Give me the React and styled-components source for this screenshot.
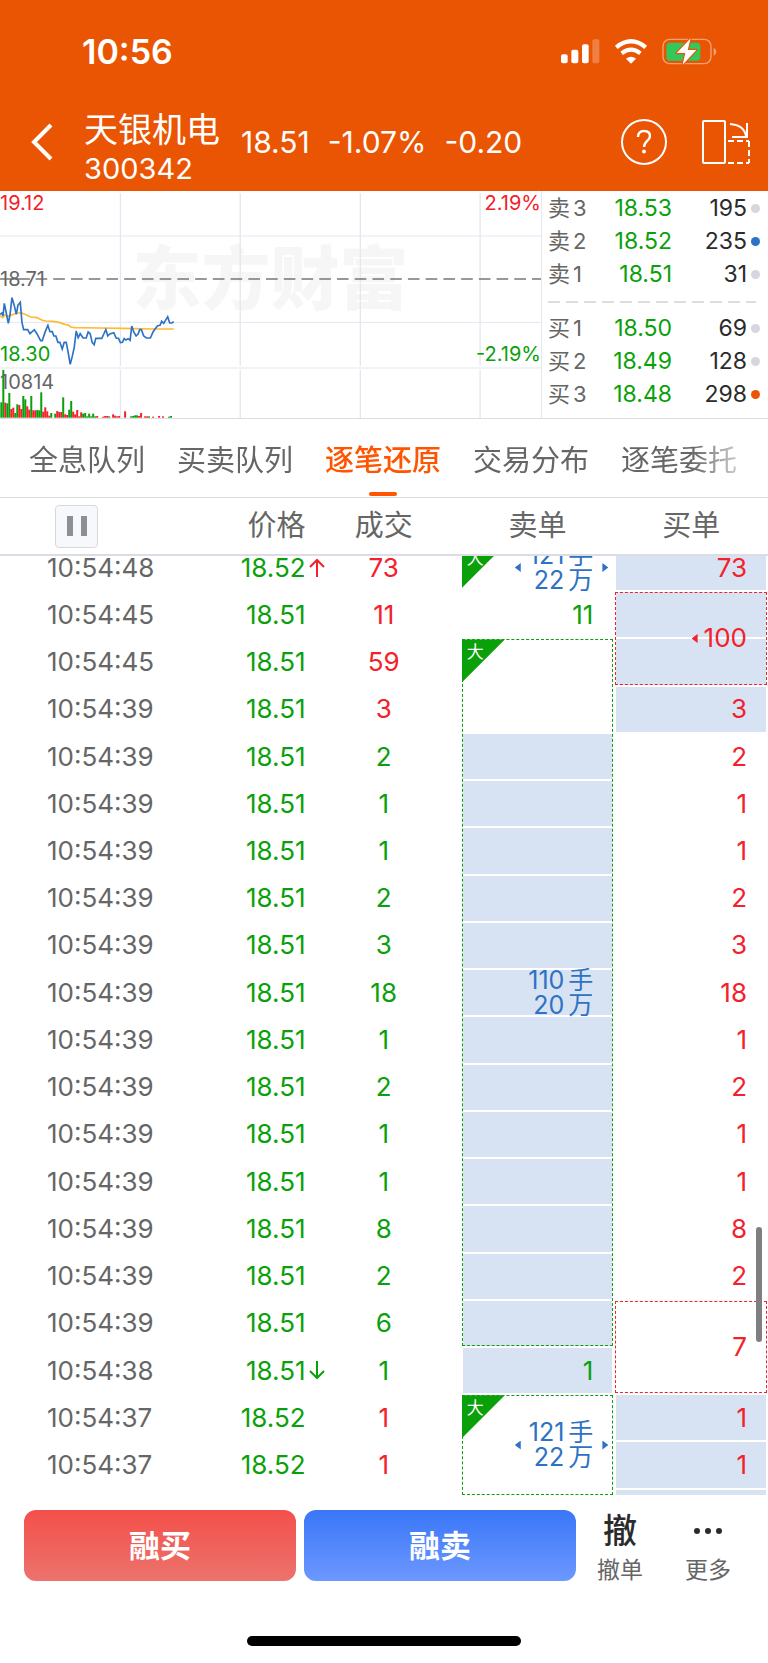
import React, { useLayoutEffect, useRef } from "react";
import styled, { createGlobalStyle, css } from "styled-components";

const colors = {
	brand: "#ea5504",
	accent: "#ff5500",
	red: "#f4202a",
	green: "#0aa00a",
	blue: "#2d72c4",
	band: "#d7e3f3",
	text: "#666666",
	dark: "#2b2b2b",
	line: "#dcdce4",
};

const GlobalStyle = createGlobalStyle`
	* {
		box-sizing: border-box;
	}

	body {
		margin: 0;
		background-color: #ffffff;
		color: ${colors.text};
		font-family: Inter, "Noto Sans CJK SC", sans-serif;
	}

	button {
		padding: 0;
		border: none;
		background: none;
		color: inherit;
		font: inherit;
		cursor: pointer;
	}
`;

const Screen = styled.div`
	display: flex;
	flex-direction: column;
	height: 100vh;
`;

const Header = styled.header`
	padding-bottom: 1px;
	background-color: ${colors.brand};
	color: #ffffff;
`;

const StatusBar = styled.div`
	display: flex;
	align-items: center;
	height: 102px;
	padding: 0 51px 0 82px;
`;

const Clock = styled.span`
	margin-right: auto;
	font-size: 34px;
	font-weight: 600;
`;

const StatusIcons = styled.div`
	display: flex;
	align-items: center;
	gap: 14px;
`;

const TitleBar = styled.div`
	display: flex;
	align-items: center;
	height: 88px;
	padding: 0 17px 8px 30px;
`;

const IconButton = styled.button`
	display: flex;
	margin-left: ${({ $gap }) => $gap || 0}px;
`;

const StockName = styled.h1`
	display: flex;
	flex-direction: column;
	margin: 14px 21px 0 31px;
	font-size: 34px;
	font-weight: 400;
	line-height: 40px;
`;

const StockCode = styled.span`
	font-size: 29px;
	line-height: 38px;
`;

const Quote = styled.div`
	display: flex;
	gap: 18px;
	margin-right: auto;
	font-size: 30px;
`;

const MarketPanel = styled.section`
	display: flex;
	border-bottom: 1px solid ${colors.line};
`;

const Chart = styled.div`
	position: relative;
	flex: 1;
	height: 227px;
	border-right: 1px solid #e6e8f0;
`;

const ChartDrawing = styled.svg`
	position: relative;
	display: block;
	width: 100%;
	height: 100%;
`;

const Watermark = styled.span`
	position: absolute;
	top: 53px;
	left: 0;
	right: 0;
	color: #f6f6f6;
	font-size: 69px;
	font-weight: 900;
	line-height: 70px;
	text-align: center;
`;

const ChartLabel = styled.span`
	position: absolute;
	top: ${({ $top }) => $top}px;
	${({ $right }) => ($right ? "right: 0" : "left: 0")};
	color: ${({ $color }) => colors[$color]};
	font-size: 20px;
	line-height: 22px;
`;

const OrderBook = styled.div`
	width: 226px;
	padding-top: 1px;
`;

const BookRow = styled.div`
	display: grid;
	grid-template-columns: 44px 80px 1fr 13px;
	align-items: center;
	height: 33px;
	padding: 0 8px 0 6px;
	font-size: 23px;
	line-height: 33px;
`;

const BookLabel = styled.span`
	display: flex;
	gap: 3px;
	font-size: 22px;
`;

const BookPrice = styled.span`
	color: ${colors.green};
	text-align: right;
`;

const BookAmount = styled.span`
	color: ${colors.dark};
	text-align: right;
`;

const Dot = styled.i`
	justify-self: end;
	width: 9px;
	height: 9px;
	border-radius: 50%;
	background-color: ${({ $color }) => $color || "#d4d7de"};
`;

const BookDivider = styled.div`
	height: 2px;
	margin: 10px 12px 9px 6px;
	background: repeating-linear-gradient(
		to right,
		${colors.line} 0 12px,
		transparent 12px 18px
	);
`;

const Tabs = styled.nav`
	display: flex;
	gap: 32px;
	height: 78px;
	padding-left: 29px;
	overflow: hidden;
	mask-image: linear-gradient(to right, #000000 90%, transparent 99%);
`;

const Tab = styled.button`
	position: relative;
	flex: none;
	font-size: 29px;
	${({ $active }) =>
		$active &&
		css`
			color: ${colors.accent};
			font-weight: 500;

			&::after {
				content: "";
				position: absolute;
				left: calc(50% - 14px);
				bottom: 1px;
				width: 28px;
				height: 4px;
				border-radius: 2px;
				background-color: ${colors.accent};
			}
		`}
`;

const TradeArea = styled.section`
	position: relative;
	flex: 1;
	min-height: 0;
	border-top: 1px solid ${colors.line};
`;

const TradeScroller = styled.div`
	height: 100%;
	overflow-y: auto;
	scrollbar-width: none;
`;

const ScrollThumb = styled.div`
	position: absolute;
	top: 73%;
	right: 6px;
	width: 6px;
	height: 115px;
	border-radius: 3px;
	background-color: #7f7f7f;
`;

const TradeTable = styled.table`
	width: 100%;
	height: calc(100% + 12px);
	border-collapse: separate;
	border-spacing: 0;
	table-layout: fixed;
	font-size: 26px;
`;

const HeadCell = styled.th`
	position: sticky;
	top: 0;
	z-index: 2;
	width: ${({ $width }) => $width}%;
	height: 58px;
	padding: 0 ${({ $right }) => $right || 0}px 0 ${({ $left }) => $left || 0}px;
	border-bottom: 2px solid ${colors.line};
	background-color: #ffffff;
	font-size: 29px;
	font-weight: 400;
	line-height: 40px;
	text-align: ${({ $align }) => $align || "center"};
`;

const PauseButton = styled.button`
	display: flex;
	align-items: center;
	justify-content: center;
	width: 43px;
	height: 43px;
	border: 1px solid #d6d9e0;
	border-radius: 4px;
	background-color: #f6f8fb;
`;

const TradeRow = styled.tr`
	height: ${({ $partial }) => ($partial ? 7 : 47)}px;
`;

const Cell = styled.td`
	padding: 0;
	line-height: 30px;
`;

const TimeCell = styled(Cell)`
	padding-left: 47px;
`;

const PriceCell = styled(Cell)`
	color: ${colors.green};
	text-align: right;
`;

const ArrowSlot = styled.span`
	display: inline-block;
	width: 20px;
	padding-left: 3px;
	text-align: left;
`;

const AmountCell = styled(Cell)`
	padding-right: 19px;
	color: ${({ $side }) => colors[$side]};
	text-align: center;
`;

const OrderCell = styled(Cell)`
	position: relative;
	padding-right: 21px;
	color: ${({ $color }) => colors[$color]};
	text-align: right;
`;

const Bands = styled.div`
	position: absolute;
	inset: 0 2px;
	display: grid;
	grid-auto-rows: 1fr;
`;

const Band = styled.div`
	margin: 1px 0;
	background-color: ${({ $filled }) => ($filled ? colors.band : "transparent")};
`;

const Frame = styled.div`
	position: absolute;
	inset: 1px;
	border: 1px dashed ${({ $color }) => colors[$color]};
`;

const BigMark = styled.span`
	position: absolute;
	top: 1px;
	left: 1px;
	width: 43px;
	height: 43px;
	padding: 3px 0 0 5px;
	background-color: ${colors.green};
	clip-path: polygon(0 0, 100% 0, 0 100%);
	color: #ffffff;
	font-size: 17px;
	line-height: 20px;
	text-align: left;
`;

const OrderValue = styled.div`
	position: relative;
	display: flex;
	align-items: center;
	justify-content: flex-end;
	gap: ${({ $big }) => ($big ? 8 : 6)}px;
`;

const OrderLines = styled.div`
	margin: -2px 0;
	color: ${colors.blue};
	font-size: 25px;
	line-height: 25px;
`;

const OrderLine = styled.div`
	display: flex;
	justify-content: flex-end;
	gap: 4px;
`;

const Pointer = styled.i`
	width: 6px;
	height: 9px;
	background-color: currentColor;
	clip-path: polygon(0 50%, 100% 0, 100% 100%);
	${({ $blue }) => $blue && `color: ${colors.blue};`}
	${({ $next }) =>
		$next &&
		css`
			position: absolute;
			right: -15px;
			clip-path: polygon(0 0, 100% 50%, 0 100%);
		`}
`;

const Footer = styled.footer`
	padding: 14px 16px 17px 24px;
`;

const Actions = styled.div`
	display: flex;
	align-items: flex-start;
`;

const TradeButton = styled.button`
	flex: 1;
	height: 71px;
	padding-bottom: 4px;
	border-radius: 12px;
	background: linear-gradient(${({ $from, $to }) => `${$from}, ${$to}`});
	color: #ffffff;
	font-size: 31px;
	font-weight: 600;

	& + & {
		margin-left: 8px;
	}
`;

const SmallAction = styled.button`
	display: flex;
	flex-direction: column;
	align-items: center;
	width: 88px;
	font-size: 23px;
	line-height: 36px;
`;

const ActionIcon = styled.span`
	display: flex;
	align-items: center;
	height: 42px;
	color: ${colors.dark};
	font-size: 34px;
	font-weight: 500;
`;

const HomeIndicator = styled.div`
	width: 274px;
	height: 10px;
	margin: 48px auto 0;
	border-radius: 5px;
	background-color: #000000;
	transform: translateX(-4px);
`;

const book = {
	sell: [
		{ label: "卖", level: 3, price: "18.53", amount: 195 },
		{ label: "卖", level: 2, price: "18.52", amount: 235, dot: colors.blue },
		{ label: "卖", level: 1, price: "18.51", amount: 31 },
	],
	buy: [
		{ label: "买", level: 1, price: "18.50", amount: 69 },
		{ label: "买", level: 2, price: "18.49", amount: 128 },
		{ label: "买", level: 3, price: "18.48", amount: 298, dot: colors.brand },
	],
};

const tabs = ["全息队列", "买卖队列", "逐笔还原", "交易分布", "逐笔委托"];

const fill = (count, value) => Array(count).fill(value);

// bands: one entry per trade that the order covers, true = shaded
const trades = [
	{
		time: "10:54:48", price: "18.52", trend: "up", amount: 73, side: "red",
		sell: { bands: [false], big: true, lines: [["121", "手"], ["22", "万"]], linked: true },
		buy: { bands: [true], value: 73 },
	},
	{
		time: "10:54:45", price: "18.51", amount: 11, side: "red",
		sell: { bands: [false], value: 11 },
		buy: { bands: [true, true], value: 100, framed: true, previous: true },
	},
	{
		time: "10:54:45", price: "18.51", amount: 59, side: "red",
		sell: {
			bands: [false, false, ...fill(13, true)],
			big: true,
			framed: true,
			lines: [["110", "手"], ["20", "万"]],
		},
	},
	{ time: "10:54:39", price: "18.51", amount: 3, side: "red", buy: { bands: [true], value: 3 } },
	...[2, 1, 1, 2, 3, 18, 1, 2, 1, 1, 8, 2].map((amount) => ({
		time: "10:54:39", price: "18.51", amount, side: "green",
		buy: { bands: [false], value: amount },
	})),
	{
		time: "10:54:39", price: "18.51", amount: 6, side: "green",
		buy: { bands: [false, false], value: 7, framed: true },
	},
	{
		time: "10:54:38", price: "18.51", trend: "down", amount: 1, side: "green",
		sell: { bands: [true], value: 1 },
	},
	{
		time: "10:54:37", price: "18.52", amount: 1, side: "red",
		sell: {
			bands: [false, false, false],
			big: true,
			framed: true,
			lines: [["121", "手"], ["22", "万"]],
			linked: true,
		},
		buy: { bands: [true], value: 1 },
	},
	{ time: "10:54:37", price: "18.52", amount: 1, side: "red", buy: { bands: [true], value: 1 } },
	{ partial: true, buy: { bands: [true] } },
];

const priceLine =
	"0,388 6,384 9,393 13,355 20,390 25,415 30,390 36,338 43,362 49,388 54,360 61,352 66,412 71,434 83,434 90,446 103,434 111,446 122,467 127,467 136,440 144,421 150,440 157,440 162,453 168,453 174,472 180,472 187,492 193,472 199,472 205,503 211,538 217,515 223,488 229,438 235,458 241,446 250,459 259,459 265,441 271,446 277,472 283,479 288,460 306,460 312,447 318,434 324,453 330,447 342,443 349,459 356,460 362,473 368,472 373,461 378,465 385,461 391,466 396,423 402,441 409,453 415,447 420,434 425,434 432,453 440,459 452,459 460,441 466,432 474,422 481,421 486,409 492,415 504,395 510,414 517,414 522,410";

const averageLine =
	"0,392 8,398 15,390 25,394 35,390 50,384 66,384 80,390 92,396 112,398 125,405 138,408 160,409 180,413 195,418 205,420 213,426 225,428 300,429 370,430 460,432 522,432";

const volumes = [
	[1, 46, "g"], [7, 143, "g"], [13, 45, "r"], [19, 43, "g"], [25, 74, "g"], [31, 26, "r"],
	[37, 30, "r"], [43, 14, "g"], [49, 40, "g"], [55, 38, "r"], [61, 26, "r"], [67, 65, "g"],
	[73, 55, "g"], [79, 34, "r"], [85, 24, "r"], [91, 65, "g"], [97, 22, "r"], [103, 22, "r"],
	[109, 23, "g"], [115, 22, "g"], [121, 76, "g"], [127, 18, "r"], [133, 31, "r"], [139, 19, "r"],
	[145, 6, "r"], [151, 14, "g"], [163, 12, "g"], [169, 20, "r"], [175, 17, "r"], [181, 17, "r"],
	[187, 61, "g"], [193, 10, "r"], [199, 8, "r"], [205, 24, "g"], [211, 50, "g"], [217, 18, "r"],
	[223, 10, "r"], [229, 23, "r"], [235, 4, "r"], [241, 16, "r"], [247, 12, "g"], [253, 14, "g"],
	[259, 4, "g"], [265, 12, "g"], [271, 4, "g"], [277, 12, "g"], [283, 4, "g"], [289, 5, "r"],
	[307, 3, "r"], [313, 5, "r"], [319, 5, "r"], [325, 4, "g"], [337, 10, "r"], [343, 6, "r"],
	[349, 4, "r"], [355, 5, "r"], [373, 19, "r"], [391, 4, "g"], [397, 5, "g"], [403, 7, "g"],
	[409, 7, "g"], [415, 5, "r"], [421, 14, "r"], [433, 4, "r"], [439, 4, "r"], [445, 4, "g"],
	[457, 3, "r"], [475, 5, "r"], [487, 4, "r"], [505, 3, "g"], [511, 5, "g"],
];

const SignalIcon = () => (
	<svg width="39" height="25" viewBox="533 116 117 75" fill="#ffffff">
		<rect x="533" y="162" width="20" height="27" rx="6" />
		<rect x="564" y="148" width="21" height="41" rx="6" />
		<rect x="596" y="132" width="20" height="57" rx="6" />
		<rect x="627" y="117" width="21" height="72" rx="6" opacity="0.25" />
	</svg>
);

const WifiIcon = () => (
	<svg width="34" height="25" viewBox="690 115 102 75" fill="none" stroke="#ffffff">
		<path d="M697 140Q741 104 785 140" strokeWidth="13" />
		<path d="M713 158Q741 136 769 158" strokeWidth="12" />
		<path d="M726 174Q741 162 756 174L741 189Z" fill="#ffffff" stroke="none" />
	</svg>
);

const BatteryIcon = () => (
	<svg width="55" height="27" viewBox="833 112 165 81">
		<rect x="836" y="116" width="144" height="73" rx="20" fill="none" stroke="#ffffff" strokeOpacity="0.45" strokeWidth="4" />
		<path d="M988 141Q996 145 996 153T988 165Z" fill="#ffffff" fillOpacity="0.45" />
		<rect x="846" y="126" width="102" height="54" rx="11" fill="#34c759" />
		<path
			d="M919 113L877 157H903L895 192L936 148H910Z"
			fill="#ffffff"
			stroke={colors.brand}
			strokeWidth="7"
			strokeLinejoin="round"
			paintOrder="stroke"
		/>
	</svg>
);

const BackIcon = () => (
	<svg width="23" height="38" viewBox="0 0 23 38" fill="none" stroke="#ffffff" strokeWidth="4">
		<path d="M21 2L4 19L21 36" />
	</svg>
);

const HelpIcon = () => (
	<svg width="46" height="46" viewBox="0 0 46 46" fill="none" stroke="#ffffff" strokeWidth="2">
		<circle cx="23" cy="23" r="22" />
		<path d="M17 18C17 14 19 12 23 12C27 12 29 14 29 17C29 22 23 22 23 28" strokeWidth="2.4" />
		<circle cx="23" cy="32.5" r="2" fill="#ffffff" stroke="none" />
	</svg>
);

const RotateIcon = () => (
	<svg width="49" height="46" viewBox="0 0 49 46" fill="none" stroke="#ffffff" strokeWidth="2">
		<rect x="1" y="2" width="22" height="42" rx="1" />
		<path d="M28 5Q42 6 44 17M45 4V18H30" />
		<path d="M26 22H47M47 22V44M26 44H47" strokeDasharray="6 3" />
	</svg>
);

const TrendIcon = ({ trend }) => (
	<svg width="16" height="19" viewBox="0 0 16 19" fill="none" stroke={trend === "up" ? colors.red : colors.green} strokeWidth="2">
		<path d={trend === "up" ? "M8 19V2M1 9L8 2L15 9" : "M8 0V17M1 10L8 17L15 10"} />
	</svg>
);

const PriceChart = () => (
	<Chart>
		<Watermark>东方财富</Watermark>
		<ChartDrawing viewBox="0 18 1626 681" preserveAspectRatio="none">
			<g stroke="#e4e7f0" strokeWidth="4">
				{[362, 722, 1083, 1443].map((x) => (
					<path key={x} d={`M${x} 24V543M${x} 554V699`} />
				))}
				<path d="M0 153H1626M0 412H1626M0 549H1626" strokeWidth="3" />
			</g>
			<g stroke="#777777" strokeWidth="4">
				<path d="M0 282H90M107 282H142" />
				<path d="M160 282H1626" strokeDasharray="35 18.3" />
			</g>
			{volumes.map(([x, height, side]) => (
				<rect
					key={x}
					x={x}
					y={698 - height}
					width="6"
					height={height}
					fill={side === "r" ? colors.red : colors.green}
				/>
			))}
			<polyline points={averageLine} fill="none" stroke="#ffb933" strokeWidth="5" />
			<polyline points={priceLine} fill="none" stroke={colors.blue} strokeWidth="5" />
		</ChartDrawing>
		<ChartLabel $top={1} $color="red">19.12</ChartLabel>
		<ChartLabel $top={77} $color="text">18.71</ChartLabel>
		<ChartLabel $top={152} $color="green">18.30</ChartLabel>
		<ChartLabel $top={180} $color="text">10814</ChartLabel>
		<ChartLabel $top={1} $color="red" $right>2.19%</ChartLabel>
		<ChartLabel $top={152} $color="green" $right>-2.19%</ChartLabel>
	</Chart>
);

const BookRows = ({ rows }) =>
	rows.map(({ label, level, price, amount, dot }) => (
		<BookRow key={level}>
			<BookLabel>
				<span>{label}</span>
				<span>{level}</span>
			</BookLabel>
			<BookPrice>{price}</BookPrice>
			<BookAmount>{amount}</BookAmount>
			<Dot $color={dot} />
		</BookRow>
	));

const Order = ({ order, color }) => (
	<OrderCell rowSpan={order.bands.length} $color={color}>
		<Bands>
			{order.bands.map((filled, index) => (
				<Band key={index} $filled={filled} />
			))}
		</Bands>
		{order.framed && <Frame $color={color} />}
		{order.big && <BigMark>大</BigMark>}
		{order.lines && (
			<OrderValue $big>
				{order.linked && <Pointer $blue />}
				<OrderLines>
					{order.lines.map(([number, unit]) => (
						<OrderLine key={unit}>
							<span>{number}</span>
							<span>{unit}</span>
						</OrderLine>
					))}
				</OrderLines>
				{order.linked && <Pointer $blue $next />}
			</OrderValue>
		)}
		{order.value && (
			<OrderValue>
				{order.previous && <Pointer />}
				{order.value}
			</OrderValue>
		)}
	</OrderCell>
);

const Trades = () => {
	const scroller = useRef(null);

	useLayoutEffect(() => {
		scroller.current.scrollTop = 12;
	}, []);

	return (
		<TradeArea>
			<TradeScroller ref={scroller}>
				<TradeTable>
					<thead>
						<tr>
							<HeadCell $width={20} $left={55} $align="left">
								<PauseButton aria-label="暂停">
									<svg width="20" height="20" viewBox="0 0 20 20" fill="#8e8e96">
										<path d="M0 0H6V20H0ZM14 0H20V20H14Z" />
									</svg>
								</PauseButton>
							</HeadCell>
							<HeadCell $width={22.4} $right={20} $align="right">价格</HeadCell>
							<HeadCell $width={17.6} $right={19}>成交</HeadCell>
							<HeadCell $width={20}>卖单</HeadCell>
							<HeadCell $width={20}>买单</HeadCell>
						</tr>
					</thead>
					<tbody>
						{trades.map((trade, index) => (
							<TradeRow key={index} $partial={trade.partial}>
								<TimeCell>{trade.time}</TimeCell>
								<PriceCell>
									{trade.price}
									{trade.price && (
										<ArrowSlot>{trade.trend && <TrendIcon trend={trade.trend} />}</ArrowSlot>
									)}
								</PriceCell>
								<AmountCell $side={trade.side}>{trade.amount}</AmountCell>
								{trade.sell && <Order order={trade.sell} color="green" />}
								{trade.buy && <Order order={trade.buy} color="red" />}
							</TradeRow>
						))}
					</tbody>
				</TradeTable>
			</TradeScroller>
			<ScrollThumb />
		</TradeArea>
	);
};

const App = () => {
	return (
		<Screen>
			<GlobalStyle />
			<Header>
				<StatusBar>
					<Clock>10:56</Clock>
					<StatusIcons>
						<SignalIcon />
						<WifiIcon />
						<BatteryIcon />
					</StatusIcons>
				</StatusBar>
				<TitleBar>
					<IconButton aria-label="返回">
						<BackIcon />
					</IconButton>
					<StockName>
						天银机电
						<StockCode>300342</StockCode>
					</StockName>
					<Quote>
						<span>18.51</span>
						<span>-1.07%</span>
						<span>-0.20</span>
					</Quote>
					<IconButton aria-label="帮助">
						<HelpIcon />
					</IconButton>
					<IconButton aria-label="横屏" $gap={35}>
						<RotateIcon />
					</IconButton>
				</TitleBar>
			</Header>

			<MarketPanel>
				<PriceChart />
				<OrderBook>
					<BookRows rows={book.sell} />
					<BookDivider />
					<BookRows rows={book.buy} />
				</OrderBook>
			</MarketPanel>

			<Tabs>
				{tabs.map((tab) => (
					<Tab key={tab} $active={tab === "逐笔还原"}>
						{tab}
					</Tab>
				))}
			</Tabs>

			<Trades />

			<Footer>
				<Actions>
					<TradeButton $from="#f44f4a" $to="#ec736d">融买</TradeButton>
					<TradeButton $from="#3a76f8" $to="#6c98ff">融卖</TradeButton>
					<SmallAction>
						<ActionIcon>撤</ActionIcon>
						撤单
					</SmallAction>
					<SmallAction>
						<ActionIcon>
							<svg width="30" height="8" viewBox="0 0 30 8" fill="currentColor">
								<circle cx="4" cy="4" r="3" />
								<circle cx="15" cy="4" r="3" />
								<circle cx="26" cy="4" r="3" />
							</svg>
						</ActionIcon>
						更多
					</SmallAction>
				</Actions>
				<HomeIndicator />
			</Footer>
		</Screen>
	);
};

export default App;
